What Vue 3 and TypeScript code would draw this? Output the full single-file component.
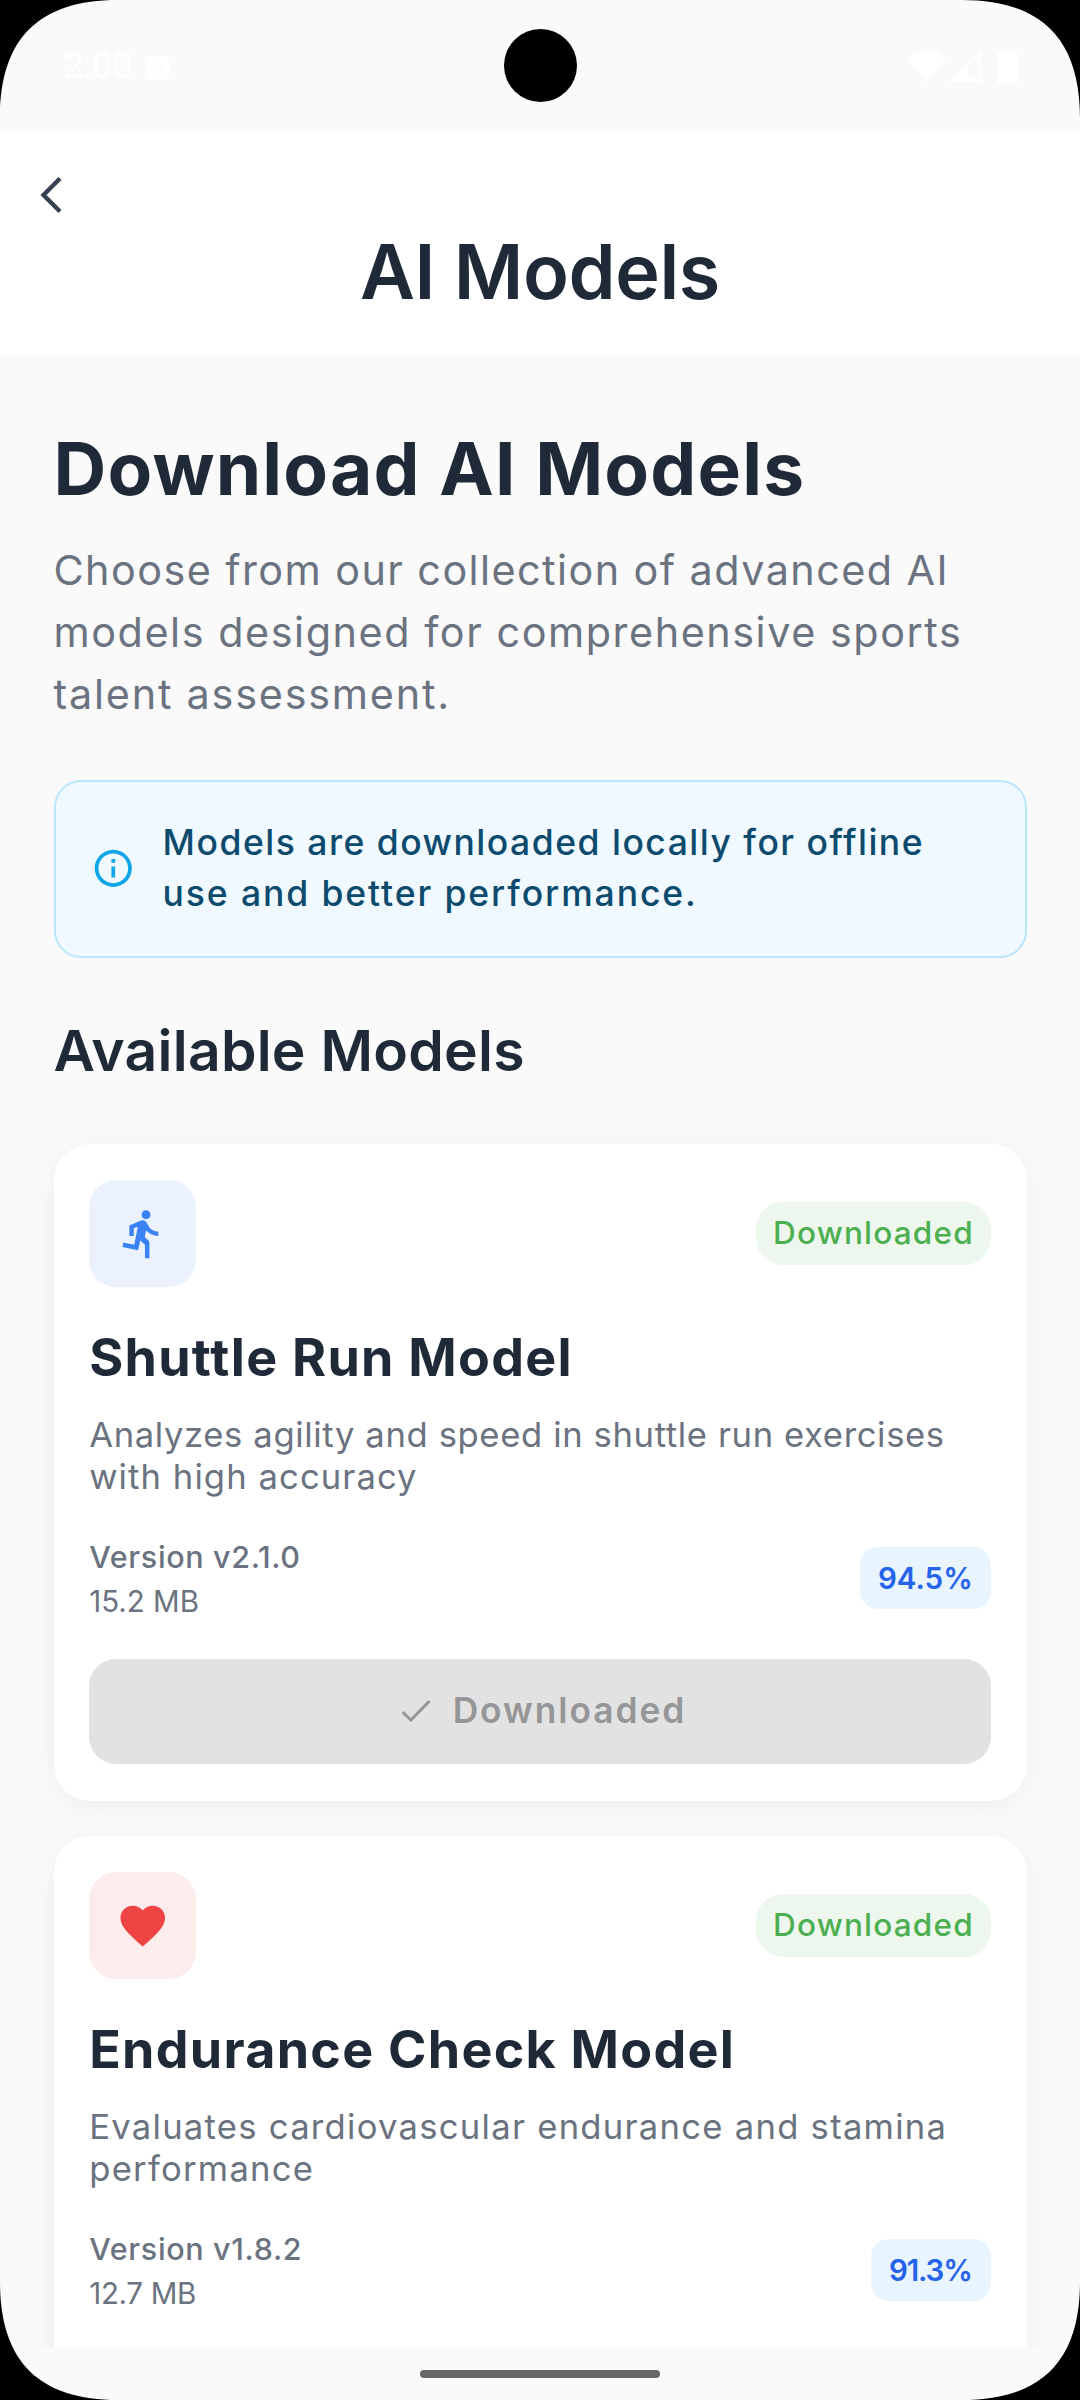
<script setup lang="ts">
interface Model {
  icon: 'run' | 'heart'
  name: string
  description: string[]
  version: string
  size: string
  accuracy: string
  action?: string
}

const intro: string[] = [
  'Choose from our collection of advanced AI',
  'models designed for comprehensive sports',
  'talent assessment.',
]

const notice: string[] = [
  'Models are downloaded locally for offline',
  'use and better performance.',
]

const models: Model[] = [
  {
    icon: 'run',
    name: 'Shuttle Run Model',
    description: ['Analyzes agility and speed in shuttle run exercises', 'with high accuracy'],
    version: 'v2.1.0',
    size: '15.2 MB',
    accuracy: '94.5%',
    action: 'Downloaded',
  },
  {
    icon: 'heart',
    name: 'Endurance Check Model',
    description: ['Evaluates cardiovascular endurance and stamina', 'performance'],
    version: 'v1.8.2',
    size: '12.7 MB',
    accuracy: '91.3%',
  },
]

const corners: string[] = ['tl', 'tr', 'bl', 'br']
</script>

<template>
  <div class="screen">
    <div class="status">
      <span class="clock">2:00</span>
      <svg class="keyboard" viewBox="0 0 22 24">
        <rect width="22" height="24" rx="2.5" fill="#fff" />
        <path d="M6 17.500 11 6l5 11.500M7.800 14h6.400" fill="none" stroke="#fafafa" stroke-width="2" />
        <path d="M12 20.500h2v1.500h-2zM15.300 20.500h2v1.500h-2zM18.600 20.500h2v1.500h-2z" fill="#fafafa" />
      </svg>
      <span class="spacer"></span>
      <svg class="signals" viewBox="0 0 110 36" fill="#fff">
        <path d="M0 11C11-1 27-1 38 11L19 34z" />
        <path d="M41 34 73 2v32zM60 17v11q0 3 3 3h7V9z" fill-rule="evenodd" />
        <path d="M95 1h8v3h4q2 0 2 2v27q0 2.500-2 2.500H91q-2 0-2-2.500V6q0-2 2-2h4z" />
      </svg>
    </div>

    <header class="header">
      <svg class="back" viewBox="0 0 54 54">
        <path d="M33 10.500 16.500 27 33 43.500" fill="none" stroke="#374151" stroke-width="4.400" />
      </svg>
      <div class="title">AI Models</div>
    </header>

    <main class="content">
      <h1 class="heading">Download AI Models</h1>
      <p class="intro"><span v-for="line in intro" :key="line" class="line">{{ line }}</span></p>

      <div class="notice">
        <svg class="info" viewBox="0 0 24 24" fill="#0ea5e9">
          <path d="M11 7h2v2h-2zm0 4h2v6h-2zm1-9C6.480 2 2 6.480 2 12s4.480 10 10 10 10-4.480 10-10S17.520 2 12 2zm0 18c-4.410 0-8-3.590-8-8s3.590-8 8-8 8 3.590 8 8-3.590 8-8 8z" />
        </svg>
        <p class="notice-text"><span v-for="line in notice" :key="line" class="line">{{ line }}</span></p>
      </div>

      <h2 class="section">Available Models</h2>

      <article v-for="model in models" :key="model.name" class="card" :class="`card-${model.icon}`">
        <div class="card-top">
          <div class="tile" :class="model.icon">
            <svg class="glyph" viewBox="0 0 24 24" fill="currentColor">
              <path v-if="model.icon === 'run'" d="M13.490 5.480c1.100 0 2-.9 2-2s-.9-2-2-2-2 .9-2 2 .9 2 2 2zm-3.600 13.900l1-4.400 2.100 2v6h2v-7.500l-2.100-2 .6-3c1.300 1.500 3.300 2.500 5.500 2.500v-2c-1.900 0-3.500-1-4.300-2.400l-1-1.600c-.4-.6-1-1-1.700-1-.3 0-.5.1-.8.1l-5.200 2.200v4.700h2v-3.400l1.800-.7-1.600 8.100-4.900-1-.4 2 7 1.400z" />
              <path v-else d="M12 21.350l-1.450-1.320C5.400 15.360 2 12.280 2 8.500 2 5.420 4.420 3 7.500 3c1.740 0 3.410.81 4.500 2.090C13.090 3.810 14.760 3 16.500 3 19.580 3 22 5.420 22 8.500c0 3.780-3.400 6.860-8.550 11.540L12 21.350z" />
            </svg>
          </div>
          <span class="badge">Downloaded</span>
        </div>
        <h3 class="name">{{ model.name }}</h3>
        <p class="description"><span v-for="line in model.description" :key="line" class="line">{{ line }}</span></p>
        <div class="meta">
          <div>
            <div class="version">Version {{ model.version }}</div>
            <div class="size">{{ model.size }}</div>
          </div>
          <span class="accuracy">{{ model.accuracy }}</span>
        </div>
        <button v-if="model.action" class="action" type="button" disabled>
          <svg class="check" viewBox="0 0 30 24">
            <path d="M1.500 13 10 21 28.500 2" fill="none" stroke="#969698" stroke-width="3" />
          </svg>
          {{ model.action }}
        </button>
      </article>
    </main>

    <footer class="nav"><span class="handle"></span></footer>

    <span class="camera"></span>
    <svg v-for="corner in corners" :key="corner" class="corner" :class="corner" viewBox="0 0 118 118">
      <path d="M0 0H118C38.800 0 0 38.800 0 118z" />
    </svg>
  </div>
</template>

<style>
body {
  margin: 0;
}
</style>

<style scoped>
.screen {
  position: relative;
  display: flex;
  flex-direction: column;
  width: 1080px;
  height: 2400px;
  overflow: hidden;
  background: #fafafa;
  color: #1f2937;
  font-family: Inter, "Liberation Sans", sans-serif;
}

h1,
h2,
h3,
p {
  margin: 0;
}

.line {
  display: block;
  white-space: nowrap;
}

.status {
  display: flex;
  align-items: center;
  flex: none;
  box-sizing: border-box;
  height: 132px;
  padding: 0 62px 0 63px;
  color: #fff;
}

.clock {
  font: 400 37px/44px Roboto, sans-serif;
  letter-spacing: -0.5px;
}

.keyboard {
  width: 22px;
  height: 24px;
  margin: 3px 0 0 15px;
}

.spacer {
  flex: 1;
}

.signals {
  width: 110px;
  height: 36px;
}

.header {
  display: flex;
  flex-direction: column;
  flex: none;
  box-sizing: border-box;
  height: 223px;
  padding-top: 36px;
  background: #fff;
}

.back {
  width: 54px;
  height: 54px;
  margin-left: 27px;
}

.title {
  margin-top: 6px;
  text-align: center;
  font-size: 75.500px;
  font-weight: 600;
  letter-spacing: -0.400px;
  line-height: 88px;
}

.content {
  flex: 1;
  min-height: 0;
  overflow: hidden;
  padding: 72px 53.500px 0;
}

.heading {
  font-size: 73px;
  font-weight: 700;
  letter-spacing: 1.200px;
  line-height: 84px;
}

.intro {
  margin-top: 28px;
  color: #6b7280;
  font-size: 41.300px;
  letter-spacing: 1.570px;
  line-height: 62.200px;
}

.intro .line:first-child {
  letter-spacing: 1.450px;
}

.intro .line:last-child {
  letter-spacing: 1.800px;
}

.notice {
  display: flex;
  align-items: center;
  gap: 27.500px;
  box-sizing: border-box;
  height: 178px;
  margin-top: 54px;
  padding: 0 35px;
  border: 2px solid #bae6fd;
  border-radius: 27px;
  background: #f0f9ff;
}

.info {
  width: 44.600px;
  height: 44.600px;
}

.notice-text {
  padding-bottom: 2px;
  color: #0c4a6e;
  font-size: 35.500px;
  font-weight: 500;
  letter-spacing: 1.500px;
  line-height: 51px;
}

.notice-text .line:last-child {
  letter-spacing: 1.900px;
}

.section {
  margin-top: 60.500px;
  font-size: 57px;
  font-weight: 600;
  letter-spacing: 0.250px;
  line-height: 66px;
}

.card {
  box-sizing: border-box;
  min-height: 657px;
  margin-top: 35px;
  padding: 36px 35.700px 37px;
  border-radius: 36px;
  background: #fff;
  box-shadow: 0 5px 27px rgba(0, 0, 0, 0.05);
}

.section + .card {
  margin-top: 60px;
}

.card-top {
  display: flex;
  align-items: center;
  justify-content: space-between;
}

.tile {
  display: flex;
  align-items: center;
  justify-content: center;
  width: 106.500px;
  height: 106.500px;
  border-radius: 27px;
}

.run {
  background: #ebf2fe;
  color: #3b82f6;
}

.heart {
  background: #fdecec;
  color: #ef4444;
}

.glyph {
  width: 53.500px;
  height: 53.500px;
}

.badge {
  padding: 0 16.900px 0 17.300px;
  border-radius: 27px;
  background: #edf7ee;
  color: #4caf50;
  font-size: 31.500px;
  font-weight: 500;
  letter-spacing: 1.200px;
  line-height: 62.500px;
}

.name {
  margin-top: 41px;
  font-size: 52px;
  font-weight: 700;
  letter-spacing: 1.280px;
  line-height: 60px;
}

.description {
  margin-top: 26.500px;
  color: #6b7280;
  font-size: 34.600px;
  letter-spacing: 0.640px;
  line-height: 41.700px;
}

.description .line:last-child {
  letter-spacing: 1.100px;
}

.card-heart .description .line {
  letter-spacing: 1.280px;
}

.meta {
  display: flex;
  align-items: center;
  justify-content: space-between;
  margin-top: 36px;
  color: #6b7280;
  font-size: 29.500px;
  line-height: 45px;
}

.version {
  font-size: 30.500px;
  font-weight: 500;
  letter-spacing: 0.650px;
}

.card-heart .size {
  letter-spacing: -0.300px;
}

.accuracy {
  margin-bottom: 1.500px;
  padding: 0 18px;
  border-radius: 18px;
  background: #e8f4fe;
  color: #2563eb;
  font-weight: 600;
  line-height: 62px;
}

.card-heart .accuracy {
  padding-right: 19px;
  letter-spacing: -1.100px;
}

.action {
  display: flex;
  align-items: center;
  justify-content: center;
  gap: 22px;
  box-sizing: border-box;
  width: 100%;
  height: 105px;
  margin-top: 35px;
  padding: 0 0 0 7px;
  border: 0;
  border-radius: 27px;
  background: #e2e2e2;
  color: #969698;
  font: 600 35.300px/50px Inter, "Liberation Sans", sans-serif;
  letter-spacing: 1.980px;
}

.check {
  width: 30px;
  height: 24px;
}

.nav {
  display: flex;
  flex: none;
  align-items: center;
  justify-content: center;
  height: 53px;
  background: #fafafa;
}

.handle {
  width: 240px;
  height: 8px;
  border-radius: 4px;
  background: #666;
}

.camera {
  position: absolute;
  top: 29px;
  left: 503.500px;
  width: 73px;
  height: 73px;
  border-radius: 50%;
  background: #000;
}

.corner {
  position: absolute;
  width: 118px;
  height: 118px;
}

.tl {
  top: 0;
  left: 0;
}

.tr {
  top: 0;
  right: 0;
  transform: scaleX(-1);
}

.bl {
  bottom: 0;
  left: 0;
  transform: scaleY(-1);
}

.br {
  bottom: 0;
  right: 0;
  transform: scale(-1);
}
</style>
